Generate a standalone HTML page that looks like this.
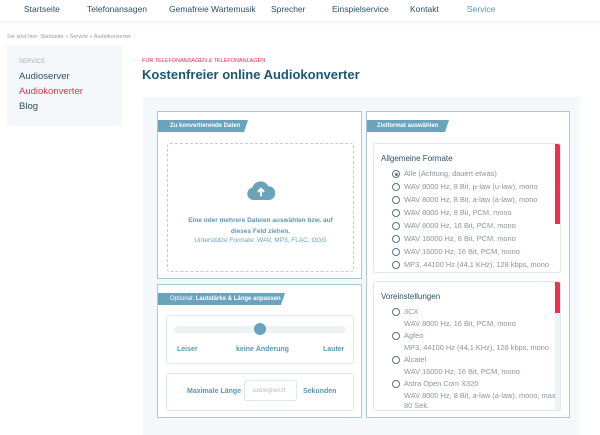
<!DOCTYPE html>
<html><head><meta charset="utf-8"><style>
*{box-sizing:border-box;margin:0;padding:0}
body{width:600px;height:435px;overflow:hidden;background:#fff;font-family:"Liberation Sans",sans-serif;position:relative}
.a{position:absolute;white-space:nowrap}
.nav{position:absolute;left:0;top:0;width:600px;height:21px;background:#fff;box-shadow:0 2px 4px rgba(0,0,0,.06)}
.nav span{position:absolute;top:4px;font-size:8.5px;color:#2d4f63}
.box{position:absolute;border:1px solid #a9cad6;background:#fff}
.tag{position:absolute;height:12px;background:#6ba3bd;color:#fff;font-size:6px;font-weight:bold;line-height:12px;padding-left:12px;clip-path:polygon(0 0,100% 0,calc(100% - 4px) 100%,0 100%)}
.inner{position:absolute;border:1px solid #dfe8ec;border-radius:3px;background:#fff}
.r{position:absolute;left:18px;width:8px;height:8px;border:1px solid #5c7482;border-radius:50%}
.it{position:absolute;left:30px;font-size:7.4px;color:#8a949a;white-space:nowrap}
.lbl{position:absolute;font-size:7px;color:#5a97b5;font-weight:bold;white-space:nowrap}
</style></head><body>
<div class="nav">
<span style="left:24px">Startseite</span><span style="left:87px">Telefonansagen</span><span style="left:169px">Gemafreie Wartemusik</span><span style="left:271px">Sprecher</span><span style="left:332px">Einspielservice</span><span style="left:410px">Kontakt</span><span style="left:467px;color:#5a97b5">Service</span>
</div>
<div class="a" style="left:7px;top:34px;font-size:5.5px;color:#999">Sie sind hier: Startseite » Service » Audiokonverter</div>
<div class="a" style="left:7px;top:45px;width:115px;height:81px;background:#f5f8fa"></div>
<div class="a" style="left:19px;top:59px;font-size:6px;color:#9bb4c2">SERVICE</div>
<div class="a" style="left:19px;top:71px;font-size:9.5px;color:#2d4f63">Audioserver</div>
<div class="a" style="left:19px;top:86px;font-size:9.5px;color:#f0304f">Audiokonverter</div>
<div class="a" style="left:19px;top:101px;font-size:9.5px;color:#2d4f63">Blog</div>
<div class="a" style="left:142px;top:58px;font-size:5.5px;color:#f0304f">FÜR TELEFONANSAGEN &amp; TELEFONANLAGEN</div>
<div class="a" style="left:142px;top:67px;font-size:13px;color:#1d5676;font-weight:bold">Kostenfreier online Audiokonverter</div>
<div class="a" style="left:143px;top:97px;width:437px;height:338px;background:#f4f8fa"></div>

<div class="box" style="left:157px;top:111px;width:205px;height:168px">
<div class="tag" style="left:0;top:8px;width:90px;padding-left:12px">Zu konvertierende Daten</div>
<div style="position:absolute;left:9px;top:31px;width:187px;height:129px;border:1px dashed #b8d0da;border-radius:3px">
<svg style="position:absolute;left:79px;top:36px" width="28" height="20" viewBox="0 0 22 16"><path d="M5 16a5 5 0 0 1-1-9.9A7 7 0 0 1 17 5a5.5 5.5 0 0 1 0 11z" fill="#6ba3bd"/><path d="M11 13V7M8.5 9.5L11 7l2.5 2.5" stroke="#fff" stroke-width="1.6" fill="none"/></svg>
<div style="position:absolute;left:0;width:100%;top:71px;text-align:center;font-size:6.5px;color:#5a97b5;font-weight:bold;line-height:11px">Eine oder mehrere Dateien auswählen bzw. auf<br>dieses Feld ziehen.</div>
<div style="position:absolute;left:0;width:100%;top:93px;text-align:center;font-size:6.5px;color:#6ba3bd">Unterstütze Formate: WAV, MP3, FLAC, OGG</div>
</div></div>

<div class="box" style="left:157px;top:284px;width:205px;height:134px">
<div class="tag" style="left:0;top:8px;width:127px;padding-left:12px"><span style="font-weight:normal">Optional:</span> Lautstärke &amp; Länge anpassen</div>
<div class="inner" style="left:8px;top:30px;width:188px;height:49px">
<div style="position:absolute;left:7px;top:10px;width:172px;height:7px;border-radius:4px;background:#edf2f5"></div>
<div style="position:absolute;left:87px;top:7px;width:12px;height:12px;border-radius:50%;background:#6ba3bd"></div>
<div class="lbl" style="left:10px;top:30px">Leiser</div>
<div class="lbl" style="left:69px;top:30px">keine Änderung</div>
<div class="lbl" style="left:156px;top:30px">Lauter</div>
</div>
<div class="inner" style="left:8px;top:88px;width:188px;height:38px">
<div class="lbl" style="left:20px;top:14px">Maximale Länge</div>
<div style="position:absolute;left:77px;top:6px;width:53px;height:21px;border:1px solid #dfe8ec;border-radius:2px;font-size:6.5px;color:#bbb;padding:6px 0 0 8px">unbegrenzt</div>
<div class="lbl" style="left:136px;top:14px">Sekunden</div>
</div>
</div>

<div class="box" style="left:366px;top:111px;width:204px;height:307px">
<div class="tag" style="left:0;top:8px;width:82px;padding-left:10px">Zielformat auswählen</div>
<div class="inner" style="left:6px;top:31px;width:188px;height:130px;overflow:hidden">
<div style="position:absolute;right:0;top:0;width:5px;height:80px;background:#f0304f"></div>
<div style="position:absolute;left:7px;top:10px;font-size:8px;color:#2d4f63">Allgemeine Formate</div>
<div class="r" style="top:26px"><div style="margin:1.5px;width:3px;height:3px;border-radius:50%;background:#5c7482"></div></div><div class="it" style="top:25px">Alle (Achtung, dauert etwas)</div>
<div class="r" style="top:39px"></div><div class="it" style="top:38px">WAV 8000 Hz, 8 Bit, µ-law (u-law), mono</div>
<div class="r" style="top:52px"></div><div class="it" style="top:51px">WAV 8000 Hz, 8 Bit, a-law (a-law), mono</div>
<div class="r" style="top:65px"></div><div class="it" style="top:64px">WAV 8000 Hz, 8 Bit, PCM, mono</div>
<div class="r" style="top:78px"></div><div class="it" style="top:77px">WAV 8000 Hz, 16 Bit, PCM, mono</div>
<div class="r" style="top:91px"></div><div class="it" style="top:90px">WAV 16000 Hz, 8 Bit, PCM, mono</div>
<div class="r" style="top:104px"></div><div class="it" style="top:103px">WAV 16000 Hz, 16 Bit, PCM, mono</div>
<div class="r" style="top:117px"></div><div class="it" style="top:116px">MP3, 44100 Hz (44,1 KHz), 128 kbps, mono</div>
</div>
<div class="inner" style="left:6px;top:169px;width:188px;height:130px;overflow:hidden">
<div style="position:absolute;right:0;top:0;width:5px;height:31px;background:#f0304f"></div>
<div style="position:absolute;right:0;top:31px;width:5px;height:99px;background:#eef3f5"></div>
<div style="position:absolute;left:7px;top:10px;font-size:8px;color:#2d4f63">Voreinstellungen</div>
<div class="r" style="top:26px"></div><div class="it" style="top:25px">3CX</div><div class="it" style="top:37px">WAV 8000 Hz, 16 Bit, PCM, mono</div>
<div class="r" style="top:50px"></div><div class="it" style="top:49px">Agfeo</div><div class="it" style="top:61px">MP3, 44100 Hz (44,1 KHz), 128 kbps, mono</div>
<div class="r" style="top:74px"></div><div class="it" style="top:73px">Alcatel</div><div class="it" style="top:85px">WAV 16000 Hz, 16 Bit, PCM, mono</div>
<div class="r" style="top:98px"></div><div class="it" style="top:97px">Astra Open Com X320</div><div class="it" style="top:109px">WAV 8000 Hz, 8 Bit, a-law (a-law), mono, max</div><div class="it" style="top:119px">80 Sek.</div>
</div>
</div>
</body></html>
